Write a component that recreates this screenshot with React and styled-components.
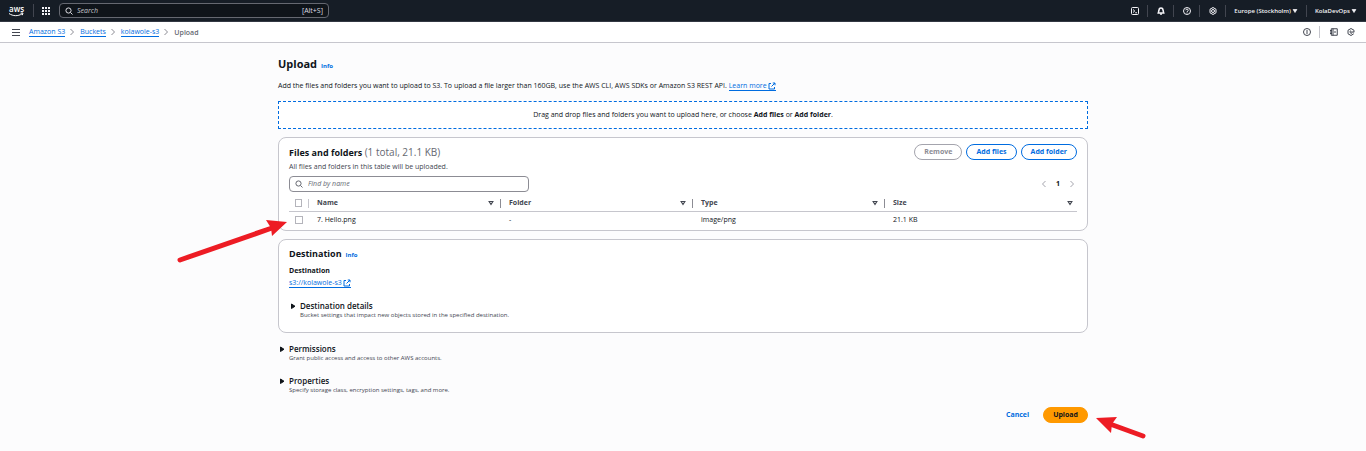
import React from 'react';
import styled, { createGlobalStyle } from 'styled-components';

const GlobalStyle = createGlobalStyle`
  *, *::before, *::after { box-sizing: border-box; }
  body {
    margin: 0;
    background: #fcfcfd;
    color: #0f141a;
    font-family: "Open Sans", "Noto Sans", sans-serif;
    font-size: 7px;
    line-height: 10px;
  }
  button, input { font: inherit; color: inherit; }
  h1, h2, p { margin: 0; }
`;

const blue = '#006ce0';
const gray = '#656871';

/* ---------- shared parts ---------- */

const Icon = styled.svg`
  display: block;
  flex: none;
  width: ${(p) => p.$size || 8}px;
  height: ${(p) => p.$size || 8}px;
  fill: none;
  stroke: currentColor;
  stroke-width: ${(p) => p.$stroke || 2};
`;

const Divider = styled.span`
  flex: none;
  width: 1px;
  height: ${(p) => p.$height || 12}px;
  background: ${(p) => p.$color || '#424650'};
`;

const IconButton = styled.button`
  display: flex;
  align-items: center;
  justify-content: center;
  width: ${(p) => p.$width || 8}px;
  padding: 0;
  border: 0;
  background: none;
  color: inherit;
  cursor: pointer;
`;

const TextLink = styled.a`
  color: ${blue};
  text-decoration: none;
  border-bottom: 1px solid ${blue};
`;

const InfoLink = styled.a`
  color: ${blue};
  font-size: 6px;
  font-weight: 700;
  text-decoration: none;
`;

/* ---------- top navigation ---------- */

const TopNav = styled.header`
  display: flex;
  align-items: center;
  height: 22px;
  padding: 0 9px 0 8px;
  background: #161d26;
  border-bottom: 1px solid #333843;
  color: #f3f3f7;
`;

const Logo = styled.a`
  display: flex;
  margin-right: 9px;
  color: #fff;
  svg { width: 16px; height: 16px; display: block; overflow: visible; }
`;

const LogoText = styled.text`
  font: 600 8px "Open Sans", sans-serif;
  fill: currentColor;
`;

const Apps = styled(IconButton)`
  margin: 0 9px 0 8px;
`;

const SearchBox = styled.label`
  display: flex;
  align-items: center;
  gap: 4px;
  width: 270px;
  height: 15px;
  padding: 0 5px;
  border: 1px solid #656871;
  border-radius: 4px;
  background: #0f141a;
  color: #dedee3;
  input {
    flex: 1;
    min-width: 0;
    padding: 0;
    border: 0;
    outline: 0;
    background: none;
  }
  input::placeholder { color: #c6c6cd; font-style: italic; opacity: 1; }
`;

const NavTools = styled.div`
  display: flex;
  align-items: center;
  gap: 8px;
  margin-left: auto;
`;

const NavMenu = styled.button`
  display: flex;
  align-items: center;
  gap: 1px;
  padding: 0;
  border: 0;
  background: none;
  font-size: 6px;
  font-weight: 600;
  line-height: 10px;
`;

/* ---------- breadcrumb bar ---------- */

const CrumbBar = styled.div`
  display: flex;
  align-items: center;
  height: 21px;
  padding: 0 11px 0 12px;
  background: #fff;
  border-bottom: 1px solid #c6c6cd;
  color: #424650;
`;

const Crumbs = styled.ol`
  display: flex;
  align-items: center;
  margin: 0 0 0 9px;
  padding: 0;
  list-style: none;
  li {
    display: flex;
    align-items: center;
    line-height: 9px;
  }
  li > svg { margin: 0 4px 0 3px; color: #8c8c94; }
`;

const Current = styled.span`
  color: ${gray};
  font-weight: 600;
`;

const PanelTools = styled.div`
  display: flex;
  align-items: center;
  gap: 8px;
  margin-left: auto;
`;

/* ---------- page ---------- */

const Page = styled.main`
  position: relative;
  max-width: 826px;
  margin: 0 auto;
  padding: 13px 8px 28px;
`;

const TitleRow = styled.div`
  display: flex;
  align-items: baseline;
  gap: 4px;
`;

const Title = styled.h1`
  font-size: 11px;
  line-height: 16px;
  font-weight: 700;
`;

const Intro = styled.p`
  margin-top: 8px;
  line-height: 12px;
`;

const ExternalLink = styled(TextLink)`
  display: inline-flex;
  align-items: center;
  gap: 1px;
  line-height: 9px;
`;

const DropZone = styled.div`
  display: flex;
  align-items: center;
  justify-content: center;
  height: 28px;
  margin-top: 9px;
  border: 1px dashed ${blue};
  background: #fff;
  text-align: center;
`;

const Panel = styled.section`
  margin-top: 8px;
  padding: ${(p) => p.$padding};
  border: 1px solid #c6c6cd;
  border-radius: 8px;
  background: #fff;
`;

const PanelHeader = styled.div`
  display: flex;
  align-items: center;
  justify-content: space-between;
`;

const Heading = styled.h2`
  font-size: 9px;
  line-height: 12px;
  font-weight: 700;
`;

const Counter = styled.span`
  font-size: 10px;
  font-weight: 400;
  color: ${gray};
`;

const Hint = styled.p`
  margin-top: 2px;
  color: #424650;
`;

const Buttons = styled.div`
  display: flex;
  align-items: center;
  justify-content: flex-end;
  gap: 4px;
  margin-top: ${(p) => p.$top || 0}px;
`;

const kinds = {
  normal: `color: ${blue}; border-color: ${blue}; background: #fff;`,
  disabled: 'color: #8c8c94; border-color: #a4a4ad; background: #fff;',
  link: `color: ${blue}; border-color: transparent; background: none;`,
  primary: 'color: #0f141a; border-color: #ff9900; background: #ff9900;',
};

const Button = styled.button`
  height: 16px;
  padding: 0 9px;
  border: 1px solid;
  border-radius: 8px;
  font-weight: 700;
  line-height: 10px;
  ${(p) => kinds[p.$kind]}
`;

const FilterRow = styled.div`
  display: flex;
  align-items: center;
  justify-content: space-between;
  margin-top: 4px;
`;

const FilterBox = styled.label`
  display: flex;
  align-items: center;
  gap: 5px;
  width: 240px;
  height: 16px;
  padding: 0 5px;
  border: 1px solid #8c8c94;
  border-radius: 4px;
  color: ${gray};
  input {
    flex: 1;
    min-width: 0;
    padding: 0;
    border: 0;
    outline: 0;
    background: none;
  }
  input::placeholder { color: ${gray}; font-style: italic; opacity: 1; }
`;

const Pager = styled.nav`
  display: flex;
  align-items: center;
  gap: 8px;
  padding-right: 1px;
  color: #a4a4ad;
  strong { color: #0f141a; }
`;

const Table = styled.table`
  width: 100%;
  margin-top: 3px;
  border-collapse: separate;
  border-spacing: 0;
  table-layout: fixed;
  th, td {
    padding: 0 0 0 8px;
    text-align: left;
    font-weight: 400;
  }
  td { height: 15px; }
  th {
    height: 17px;
    border-bottom: 1px solid #c6c6cd;
    font-weight: 700;
    color: #424650;
  }
  th:first-child, td:first-child { width: 20px; padding-left: 6px; }
`;

const HeadCell = styled.div`
  display: flex;
  align-items: center;
  gap: 6px;
  padding-right: ${(p) => (p.$last ? 4 : 0)}px;
  svg, input + span { margin-left: auto; }
`;

const CheckBox = styled.input`
  appearance: none;
  display: block;
  width: 8px;
  height: 8px;
  margin: 0;
  border: 1px solid #b4b4bb;
  background: #fff;
`;

const Label = styled.p`
  margin-top: 6px;
  font-weight: 700;
`;

const LinkLine = styled.p`
  margin-top: 2px;
`;

const Section = styled.section`
  display: grid;
  grid-template-columns: 11px 1fr;
  margin-top: ${(p) => p.$top}px;
`;

const Toggle = styled.button`
  grid-column: 1 / 3;
  display: flex;
  align-items: center;
  gap: 3px;
  padding: 0;
  border: 0;
  background: none;
  font-size: 8px;
  font-weight: 600;
  line-height: 10px;
  text-align: left;
`;

const Note = styled.p`
  grid-column: 2;
  font-size: 6px;
  line-height: 8px;
  color: #424650;
`;

const Pointer = styled.svg`
  position: absolute;
  left: ${(p) => p.$left};
  top: ${(p) => p.$top}px;
  pointer-events: none;
`;

/* ---------- icons ---------- */

const Chevron = ({ left }) => (
  <Icon viewBox="0 0 16 16" aria-hidden="true">
    <path d={left ? 'M11 2 5 8l6 6' : 'M5 2l6 6-6 6'} />
  </Icon>
);

const Magnifier = () => (
  <Icon viewBox="0 0 16 16" aria-hidden="true">
    <circle cx="7" cy="7" r="5.2" />
    <path d="m11 11 4 4" />
  </Icon>
);

const Caret = () => (
  <Icon viewBox="0 0 16 16" $size={6} aria-hidden="true">
    <path d="M3 4h10l-5 8z" fill="currentColor" />
  </Icon>
);

const SortIcon = () => (
  <Icon viewBox="0 0 16 16" $size={6} $stroke={3} aria-hidden="true">
    <path d="M3 4h10l-5 8z" />
  </Icon>
);

const Expand = () => (
  <Icon viewBox="0 0 16 16" aria-hidden="true">
    <path d="M5 4v9l7-4.5z" fill="currentColor" />
  </Icon>
);

const External = () => (
  <Icon viewBox="0 0 16 16" aria-hidden="true">
    <path d="M6 3H2v11h11v-4M9.500 2H14v4.500M14 2 7 9" />
  </Icon>
);

const TOOLS = [
  ['CloudShell', <><rect x="1" y="1" width="14" height="14" rx="2" /><path d="m4 5 3.500 3L4 11M8.500 11.500H12" /></>],
  ['Notifications', <><path d="M8 2c-3 0-4 2-4 4.500L2.500 12h11L12 6.500C12 4 11 2 8 2z" strokeWidth="3" /><path d="M6 14h4" strokeWidth="3" /></>],
  ['Help', <><circle cx="8" cy="8" r="7" /><path d="M5.500 6.500c0-3 5-3 5 0 0 1.500-2.500 1.500-2.500 3.500M8 11v1.800" /></>],
  ['Settings', <><path d="M8 1l6 3.500v7L8 15l-6-3.500v-7z" /><circle cx="8" cy="8" r="3" /></>],
];

const CRUMBS = ['Amazon S3', 'Buckets', 'kolawole-s3'];
const COLUMNS = ['Name', 'Folder', 'Type', 'Size'];
const FILES = [['7. Hello.png', '-', 'image/png', '21.1 KB']];

function Expandable({ title, note, top }) {
  return (
    <Section $top={top}>
      <Toggle type="button" aria-expanded="false"><Expand />{title}</Toggle>
      <Note>{note}</Note>
    </Section>
  );
}

export default function App() {
  return (
    <>
      <GlobalStyle />
      <TopNav>
        <Logo href="#home" aria-label="AWS home">
          <svg viewBox="0 0 16 16">
            <LogoText x="1" y="9">aws</LogoText>
            <path d="M1 10.500c4 2.800 9 2.800 13 .4M12.500 10.200l2.500-.2-.7 2.200" fill="none" stroke="currentColor" />
          </svg>
        </Logo>
        <Divider $height={13} />
        <Apps type="button" aria-label="Services">
          <Icon viewBox="0 0 8 8" aria-hidden="true">
            {[0, 3, 6].map((y) => [0, 3, 6].map((x) => (
              <rect key={x + '-' + y} x={x} y={y} width="2" height="2" fill="currentColor" stroke="none" />
            )))}
          </Icon>
        </Apps>
        <SearchBox>
          <Magnifier />
          <input type="search" placeholder="Search" aria-label="Search" />
          <span>[Alt+S]</span>
        </SearchBox>
        <NavTools>
          {TOOLS.map(([name, art]) => (
            <React.Fragment key={name}>
              <IconButton type="button" aria-label={name} $width={9}>
                <Icon viewBox="0 0 16 16" aria-hidden="true">{art}</Icon>
              </IconButton>
              <Divider />
            </React.Fragment>
          ))}
          <NavMenu type="button">Europe (Stockholm)<Caret /></NavMenu>
          <Divider />
          <NavMenu type="button">KolaDevOps<Caret /></NavMenu>
        </NavTools>
      </TopNav>

      <CrumbBar>
        <IconButton type="button" aria-label="Open navigation">
          <Icon viewBox="0 0 8 8" $stroke={1} aria-hidden="true">
            <path d="M0 1.500h8M0 4.500h8M0 7.500h8" />
          </Icon>
        </IconButton>
        <nav aria-label="Breadcrumbs">
          <Crumbs>
            {CRUMBS.map((name) => (
              <li key={name}><TextLink href="#crumb">{name}</TextLink><Chevron /></li>
            ))}
            <li><Current aria-current="page">Upload</Current></li>
          </Crumbs>
        </nav>
        <PanelTools>
          <IconButton type="button" aria-label="Info">
            <Icon viewBox="0 0 16 16"><circle cx="8" cy="8" r="7" /><path d="M8 4v8" /></Icon>
          </IconButton>
          <Divider $color="#c6c6cd" />
          <IconButton type="button" aria-label="Tutorials" $width={11}>
            <Icon viewBox="0 0 16 16"><path d="M2.500 1.500h12v13h-12zM6 1v14M0 5h4M0 8h4M0 11h4M8 8h4" /></Icon>
          </IconButton>
          <IconButton type="button" aria-label="Diagnostics">
            <Icon viewBox="0 0 16 16"><path d="M13.500 11.500 8 15l-6-3.500v-7L8 1l6 3.500v4M8 8h6M8 5.500a2.500 2.500 0 1 0 2.500 4" /></Icon>
          </IconButton>
        </PanelTools>
      </CrumbBar>

      <Page>
        <TitleRow>
          <Title>Upload</Title>
          <InfoLink href="#info">Info</InfoLink>
        </TitleRow>
        <Intro>
          Add the files and folders you want to upload to S3. To upload a file larger than 160GB, use the AWS CLI, AWS SDKs or Amazon S3 REST API.{' '}
          <ExternalLink href="#learn">Learn more <External /></ExternalLink>
        </Intro>

        <DropZone>
          <p>Drag and drop files and folders you want to upload here, or choose <b>Add files</b> or <b>Add folder</b>.</p>
        </DropZone>

        <Panel $padding="6px 10px 3px">
          <PanelHeader>
            <Heading>Files and folders <Counter>(1 total, 21.1 KB)</Counter></Heading>
            <Buttons>
              <Button type="button" disabled $kind="disabled">Remove</Button>
              <Button type="button" $kind="normal">Add files</Button>
              <Button type="button" $kind="normal">Add folder</Button>
            </Buttons>
          </PanelHeader>
          <Hint>All files and folders in this table will be uploaded.</Hint>
          <FilterRow>
            <FilterBox>
              <Magnifier />
              <input type="search" placeholder="Find by name" aria-label="Find by name" />
            </FilterBox>
            <Pager aria-label="Pages">
              <IconButton type="button" aria-label="Previous page"><Chevron left /></IconButton>
              <strong>1</strong>
              <IconButton type="button" aria-label="Next page"><Chevron /></IconButton>
            </Pager>
          </FilterRow>
          <Table>
            <thead>
              <tr>
                <th>
                  <HeadCell>
                    <CheckBox type="checkbox" aria-label="Select all files" />
                    <Divider $height={9} $color="#c6c6cd" />
                  </HeadCell>
                </th>
                {COLUMNS.map((name, i) => {
                  const last = i === COLUMNS.length - 1;
                  return (
                    <th key={name} scope="col">
                      <HeadCell $last={last}>
                        {name}
                        <SortIcon />
                        {!last && <Divider $height={9} $color="#8c8c94" />}
                      </HeadCell>
                    </th>
                  );
                })}
              </tr>
            </thead>
            <tbody>
              {FILES.map((file) => (
                <tr key={file[0]}>
                  <td><CheckBox type="checkbox" aria-label={'Select ' + file[0]} /></td>
                  {file.map((value, i) => <td key={COLUMNS[i]}>{value}</td>)}
                </tr>
              ))}
            </tbody>
          </Table>
        </Panel>

        <Panel $padding="8px 10px 13px">
          <TitleRow>
            <Heading>Destination</Heading>
            <InfoLink href="#destination-info">Info</InfoLink>
          </TitleRow>
          <Label>Destination</Label>
          <LinkLine><ExternalLink href="#bucket">s3://kolawole-s3 <External /></ExternalLink></LinkLine>
          <Expandable top={13} title="Destination details" note="Bucket settings that impact new objects stored in the specified destination." />
        </Panel>

        <Expandable top={11} title="Permissions" note="Grant public access and access to other AWS accounts." />
        <Expandable top={14} title="Properties" note="Specify storage class, encryption settings, tags, and more." />

        <Buttons $top={13}>
          <Button type="button" $kind="link">Cancel</Button>
          <Button type="button" $kind="primary">Upload</Button>
        </Buttons>

        <Pointer $left="-94px" $top={174} width="112" height="48" viewBox="176 217 112 48" aria-hidden="true">
          <path d="M180 260 272 228" stroke="#ed1c24" strokeWidth="5" strokeLinecap="round" />
          <path d="M287 222 266 220 271 228 272 236z" fill="#ed1c24" />
        </Pointer>
        <Pointer $left="calc(100% - 2px)" $top={372} width="54" height="26" viewBox="1094 415 54 26" aria-hidden="true">
          <path d="M1143 436 1110 424" stroke="#ed1c24" strokeWidth="5" strokeLinecap="round" />
          <path d="M1096 418 1117 417 1112 424 1111 433z" fill="#ed1c24" />
        </Pointer>
      </Page>
    </>
  );
}
